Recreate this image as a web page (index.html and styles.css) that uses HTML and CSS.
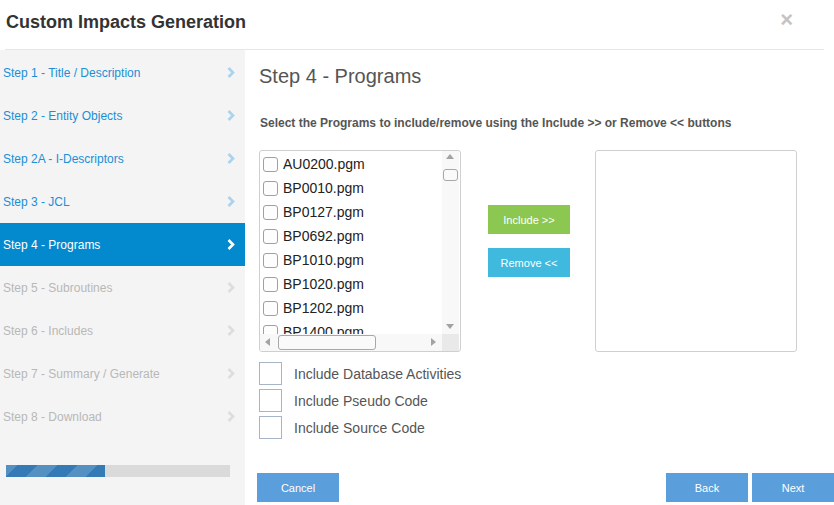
FILE: index.html
```html
<!DOCTYPE html>
<html>
<head>
<meta charset="utf-8">
<link rel="stylesheet" href="styles.css">
</head>
<body>
<div class="dialog">
  <div class="header">
    <div class="title">Custom Impacts Generation</div>
    <div class="close">×</div>
  </div>
  <div class="body">
    <div class="sidebar">
      <div class="steps">
        <div class="step done"><span>Step 1 - Title / Description</span><svg class="chev" width="8" height="11" viewBox="0 0 8 11"><polyline points="1.5,1 6,5.5 1.5,10" fill="none" stroke="currentColor" stroke-width="2.6"/></svg></div>
        <div class="step done"><span>Step 2 - Entity Objects</span><svg class="chev" width="8" height="11" viewBox="0 0 8 11"><polyline points="1.5,1 6,5.5 1.5,10" fill="none" stroke="currentColor" stroke-width="2.6"/></svg></div>
        <div class="step done"><span>Step 2A - I-Descriptors</span><svg class="chev" width="8" height="11" viewBox="0 0 8 11"><polyline points="1.5,1 6,5.5 1.5,10" fill="none" stroke="currentColor" stroke-width="2.6"/></svg></div>
        <div class="step done"><span>Step 3 - JCL</span><svg class="chev" width="8" height="11" viewBox="0 0 8 11"><polyline points="1.5,1 6,5.5 1.5,10" fill="none" stroke="currentColor" stroke-width="2.6"/></svg></div>
        <div class="step active"><span>Step 4 - Programs</span><svg class="chev" width="8" height="11" viewBox="0 0 8 11"><polyline points="1.5,1 6,5.5 1.5,10" fill="none" stroke="currentColor" stroke-width="2.6"/></svg></div>
        <div class="step todo"><span>Step 5 - Subroutines</span><svg class="chev" width="8" height="11" viewBox="0 0 8 11"><polyline points="1.5,1 6,5.5 1.5,10" fill="none" stroke="currentColor" stroke-width="2.6"/></svg></div>
        <div class="step todo"><span>Step 6 - Includes</span><svg class="chev" width="8" height="11" viewBox="0 0 8 11"><polyline points="1.5,1 6,5.5 1.5,10" fill="none" stroke="currentColor" stroke-width="2.6"/></svg></div>
        <div class="step todo"><span>Step 7 - Summary / Generate</span><svg class="chev" width="8" height="11" viewBox="0 0 8 11"><polyline points="1.5,1 6,5.5 1.5,10" fill="none" stroke="currentColor" stroke-width="2.6"/></svg></div>
        <div class="step todo"><span>Step 8 - Download</span><svg class="chev" width="8" height="11" viewBox="0 0 8 11"><polyline points="1.5,1 6,5.5 1.5,10" fill="none" stroke="currentColor" stroke-width="2.6"/></svg></div>
      </div>
      <div class="progress"><div class="progress-fill" style="width: 44%"></div></div>
    </div>
    <div class="main">
      <div class="content">
        <h2 class="heading">Step 4 - Programs</h2>
        <p class="instr">Select the Programs to include/remove using the Include &gt;&gt; or Remove &lt;&lt; buttons</p>
        <div class="picker">
          <div class="listbox">
            <div class="items">
              <div class="item"><span class="cb"></span>AU0200.pgm</div>
              <div class="item"><span class="cb"></span>BP0010.pgm</div>
              <div class="item"><span class="cb"></span>BP0127.pgm</div>
              <div class="item"><span class="cb"></span>BP0692.pgm</div>
              <div class="item"><span class="cb"></span>BP1010.pgm</div>
              <div class="item"><span class="cb"></span>BP1020.pgm</div>
              <div class="item"><span class="cb"></span>BP1202.pgm</div>
              <div class="item"><span class="cb"></span>BP1400.pgm</div>
            </div>
            <div class="vscroll">
              <span class="arr up"></span>
              <span class="vthumb"></span>
              <span class="arr down"></span>
            </div>
            <div class="hscroll">
              <span class="arr left"></span>
              <span class="hthumb"></span>
              <span class="arr right"></span>
            </div>
            <div class="corner"></div>
          </div>
          <div class="actions">
            <button class="btn include">Include &gt;&gt;</button>
            <button class="btn remove">Remove &lt;&lt;</button>
          </div>
          <div class="selbox"></div>
        </div>
        <div class="options">
          <div class="opt"><span class="sq"></span>Include Database Activities</div>
          <div class="opt"><span class="sq"></span>Include Pseudo Code</div>
          <div class="opt"><span class="sq"></span>Include Source Code</div>
        </div>
      </div>
      <div class="footer">
        <button class="btn nav">Cancel</button>
        <div class="spacer"></div>
        <button class="btn nav">Back</button>
        <button class="btn nav">Next</button>
      </div>
    </div>
  </div>
</div>
</body>
</html>
```

FILE: styles.css
```css
* { box-sizing: border-box; }
html, body { margin: 0; padding: 0; background: #fff; }
body {
  width: 834px;
  height: 505px;
  overflow: hidden;
  font-family: "Liberation Sans", Arial, sans-serif;
  color: #555;
}
.dialog { display: flex; flex-direction: column; height: 505px; }
.header {
  height: 50px;
  margin: 0 10px 0 5px;
  border-bottom: 1px solid #e6e6e6;
  display: flex;
  justify-content: space-between;
  align-items: flex-start;
  padding: 11px 31px 0 1px;
}
.title { font-size: 18px; line-height: 22px; font-weight: bold; color: #333; }
.close { font-size: 22px; line-height: 18px; font-weight: bold; color: #c4c4c4; }
.body { flex: 1; display: flex; }
.sidebar {
  width: 245px;
  background: #f4f4f4;
  padding-top: 1px;
}
.step {
  height: 43px;
  display: flex;
  align-items: center;
  justify-content: space-between;
  padding: 0 10px 0 3px;
  font-size: 12px;
}
.step.done { color: #1a8fd6; }
.step.done .chev { color: #a9d3ee; }
.step.active { background: #0389ce; color: #fff; }
.step.active .chev { color: #fff; }
.step.todo { color: #b8b8b8; }
.step.todo .chev { color: #dddddd; }
.progress {
  margin: 27px 15px 0 6px;
  height: 12px;
  background: #dadada;
}
.progress-fill {
  height: 12px;
  background-color: #337ab7;
  background-image: linear-gradient(135deg, rgba(255,255,255,.17) 25%, transparent 25%, transparent 50%, rgba(255,255,255,.17) 50%, rgba(255,255,255,.17) 75%, transparent 75%, transparent);
  background-size: 40px 40px;
  background-position: -8px 0;
}
.main { flex: 1; display: flex; flex-direction: column; }
.content { padding: 14px 0 0 14px; }
.heading { margin: 0; font-size: 20px; line-height: 24px; font-weight: normal; color: #555; }
.instr { margin: 27px 0 0 1px; font-size: 12px; line-height: 16px; font-weight: bold; color: #555; }
.picker { display: flex; margin-top: 19px; }
.listbox {
  position: relative;
  width: 202px;
  height: 202px;
  border: 1px solid #cfcfcf;
  border-radius: 3px;
  overflow: hidden;
  background: #fff;
}
.items { padding: 1px 0 0 3px; }
.item {
  height: 24px;
  display: flex;
  align-items: center;
  font-size: 14px;
  color: #222;
  white-space: nowrap;
}
.cb {
  width: 15px;
  height: 15px;
  border: 1px solid #a0a0a0;
  border-radius: 3px;
  background: #fdfdfd;
  margin-right: 5px;
}
.vscroll {
  position: absolute;
  right: 1px;
  top: 0;
  bottom: 17px;
  width: 17px;
  background: #f8f8f8;
}
.hscroll {
  position: absolute;
  left: 0;
  right: 18px;
  bottom: 0;
  height: 17px;
  background: #f8f8f8;
}
.corner {
  position: absolute;
  right: 1px;
  bottom: 0;
  width: 17px;
  height: 17px;
  background: #e9e9e9;
}
.arr { position: absolute; width: 0; height: 0; border: 4px solid transparent; }
.arr.up { left: 4px; top: 3px; border-width: 0 4.5px 5px; border-bottom-color: #a3a3a3; }
.arr.down { left: 4px; bottom: 5px; border-width: 5px 4.5px 0; border-top-color: #a3a3a3; }
.arr.left { left: 5px; top: 4px; border-width: 4.5px 5px 4.5px 0; border-right-color: #a3a3a3; }
.arr.right { right: 6px; top: 4px; border-width: 4.5px 0 4.5px 5px; border-left-color: #a3a3a3; }
.vthumb {
  position: absolute;
  left: 1px;
  top: 18px;
  width: 15px;
  height: 12px;
  border: 1px solid #a8a8a8;
  border-radius: 3px;
  background: #fafafa;
}
.hthumb {
  position: absolute;
  left: 18px;
  top: 1px;
  width: 98px;
  height: 15px;
  border: 1px solid #a8a8a8;
  border-radius: 3px;
  background: #fafafa;
}
.actions {
  display: flex;
  flex-direction: column;
  gap: 14px;
  margin: 55px 25px 0 27px;
}
.btn {
  border: 0;
  font-family: "Liberation Sans", Arial, sans-serif;
  font-size: 11px;
  color: #fff;
  width: 82px;
  height: 29px;
  padding: 0;
  border-radius: 0;
}
.include { background: #8cc851; }
.remove { background: #3fb9dd; }
.selbox {
  width: 202px;
  height: 202px;
  border: 1px solid #cfcfcf;
  border-radius: 3px;
}
.options { margin-top: 10px; display: flex; flex-direction: column; gap: 4px; }
.opt { display: flex; align-items: center; height: 23px; font-size: 14px; color: #555; }
.sq {
  width: 23px;
  height: 23px;
  border: 1px solid #a7b5c9;
  margin-right: 12px;
}
.footer { display: flex; gap: 4px; margin-top: 34px; padding-left: 12px; }
.spacer { flex: 1; }
.nav { background: #5a9edb; }
```
